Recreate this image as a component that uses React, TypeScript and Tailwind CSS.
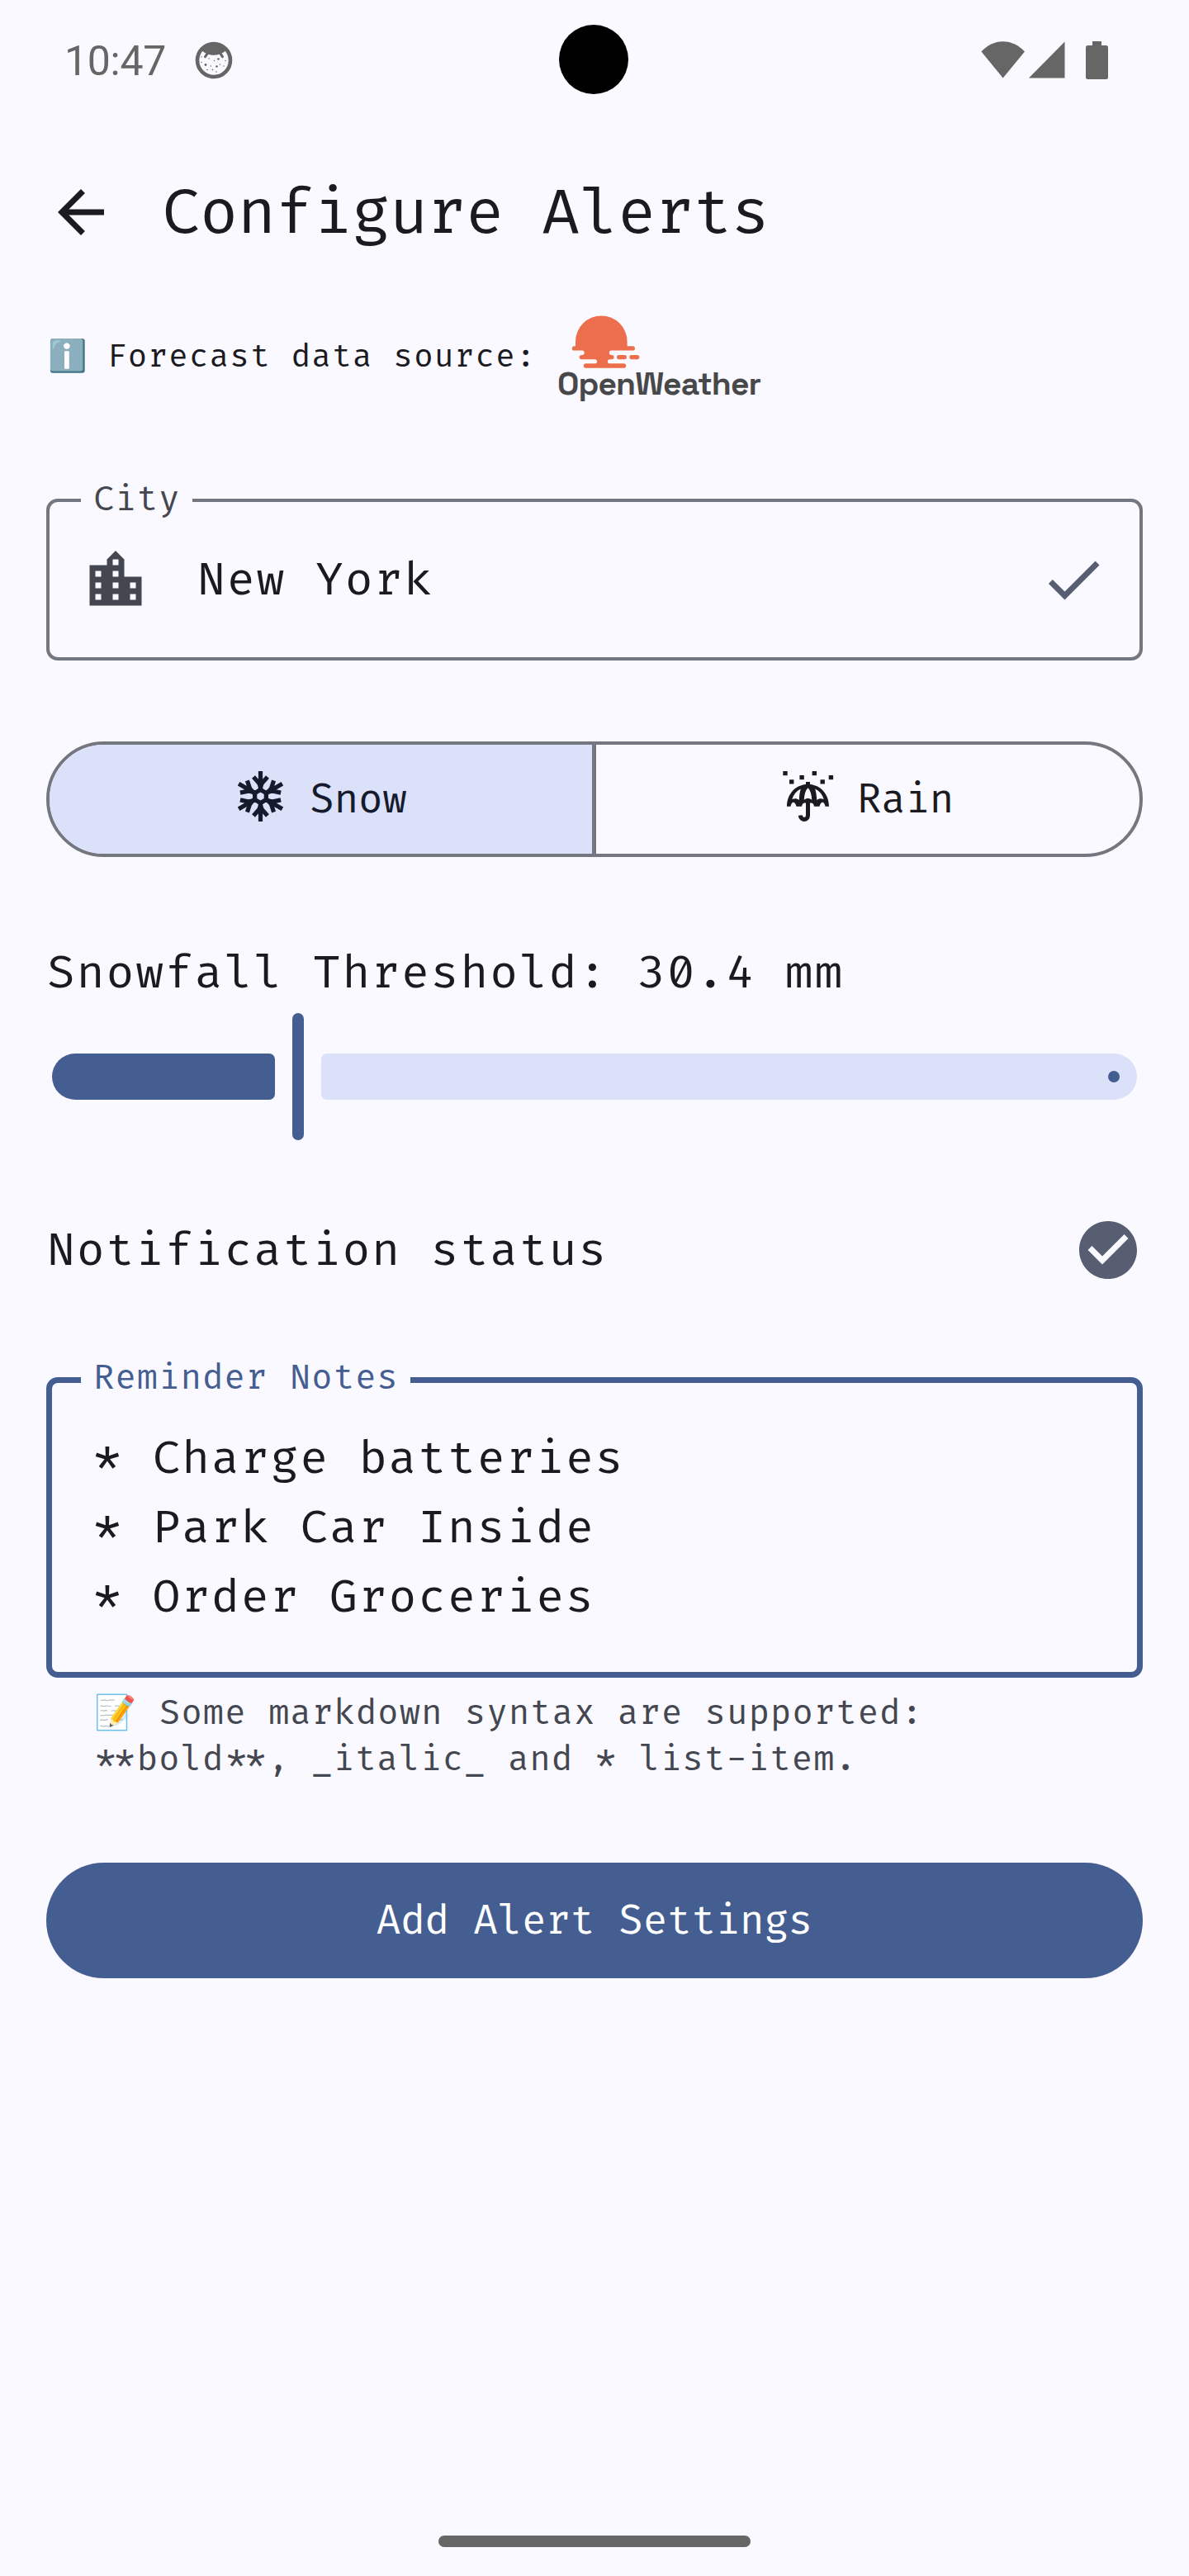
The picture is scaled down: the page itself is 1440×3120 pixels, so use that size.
import type { ReactNode } from "react";

function StatusBar() {
  return (
    <div className="relative flex h-36 items-center justify-between pl-[78px] pr-[98px] text-[#666666]">
      <div className="flex items-center">
        <span className="w-[124px] whitespace-nowrap pt-1 font-[Roboto] text-[50px] leading-[56px] tracking-[-0.3px]">10:47</span>
        <svg className="mt-[2px] ml-[34px] size-[46px]" viewBox="0 0 46 46">
          <circle cx="23" cy="23" r="20" fill="#faf9ff" stroke="#666666" strokeWidth="4.6" />
          <path d="M7 9.5C10 5 16 1.5 23 1.5S36 5 39 9.500l-3 3c-1.500 1-2.500 1.600-3.500 2l2.300 3.500a1.300 1.300 0 0 1-2.600 1.400l-2.600-3.600c-4 1.200-9 1.200-13.200 0l-2.600 3.600a1.300 1.300 0 0 1-2.600-1.400l2.300-3.500c-1-.4-2-1-3.500-2z" fill="#666666" />
          <g fill="#666666">
            <circle cx="28.500" cy="21.500" r="1.300" />
            <circle cx="13" cy="28.500" r="1.400" />
            <circle cx="26.500" cy="30.500" r="1.300" />
            <circle cx="8" cy="19" r=".7" />
            <circle cx="17" cy="21" r=".7" />
            <circle cx="23.500" cy="23.500" r=".7" />
            <circle cx="37" cy="23.500" r=".7" />
            <circle cx="8" cy="25.500" r=".7" />
            <circle cx="19.300" cy="30" r=".7" />
            <circle cx="30.500" cy="28" r=".7" />
            <circle cx="35" cy="30" r=".7" />
            <circle cx="15" cy="34.500" r=".8" />
            <circle cx="21.500" cy="34.500" r=".8" />
            <circle cx="26" cy="37" r=".8" />
          </g>
        </svg>
      </div>
      <div className="absolute left-[677px] top-[30px] size-[84px] rounded-full bg-black" />
      <svg className="mt-[2px] h-[48px] w-[154px]" viewBox="0 0 154 48" fill="currentColor">
        <path d="M.5 13.500C7.500 6 16.500 1.200 26.700 1.200S46 6 53 13.500L26.700 45.500z" />
        <path d="M58 45.500 101.500 1.500v44z" />
        <path d="M135 1h11v5h5.500a2.500 2.500 0 0 1 2.500 2.500v36a2.500 2.500 0 0 1-2.500 2.500h-22a2.500 2.500 0 0 1-2.500-2.500v-36A2.500 2.500 0 0 1 129.500 6H135z" />
      </svg>
    </div>
  );
}

function OpenWeatherLogo() {
  return (
    <div className="flex w-[246px] flex-col pt-[2px]">
      <svg className="ml-[17px] h-[64px] w-[84px]" viewBox="691 382 84 64" fill="#ec6e4c">
        <path d="M696 420v-6.300a31.300 31.300 0 0 1 62.600 0V419.300H765.300a2.650 2.650 0 0 1 0 5.300H739.500a2.700 2.700 0 0 0 0 5.400H740a2.600 2.600 0 0 1 0 5.200H737.500a2.500 2.500 0 0 0 0 5.100H754.500a2.650 2.650 0 0 1 0 5.400H708.500a2.650 2.650 0 0 1 0-5.400H719.500a2.500 2.500 0 0 0 0-5.100H703.300a2.600 2.600 0 0 1 0-5.200H704a2.700 2.700 0 0 0 0-5.400H694.500a2.650 2.650 0 0 1 0-5.300H696z" />
        <rect x="746" y="430" width="12" height="5.200" rx="2.600" />
        <rect x="761.300" y="430" width="12" height="5.200" rx="2.600" />
      </svg>
      <span className="whitespace-nowrap font-['Space_Grotesk',Inter,sans-serif] text-[39px] font-bold leading-[38px] tracking-[-0.9px] text-[#48484a]">OpenWeather</span>
    </div>
  );
}

function Field({ label, className, labelClass, children }: { label: string; className: string; labelClass: string; children: ReactNode }) {
  return (
    <div className={"relative rounded-[14px] " + className}>
      <span className={"absolute whitespace-nowrap bg-[#faf9ff] pl-[15px] pr-[14px] text-[41px] leading-[56px] tracking-[1.2px] " + labelClass}>{label}</span>
      {children}
    </div>
  );
}

function Snowflake() {
  return (
    <svg className="mb-[7px] size-[63px]" viewBox="-31.500 -31.500 63 63" fill="none" stroke="currentColor" strokeWidth="5.200">
      <path d="M0-7.900 6.800-3.950V3.950L0 7.900-6.800 3.950V-3.950z" />
      {[0, 60, 120, 180, 240, 300].map((a) => (
        <g key={a} transform={`rotate(${a})`}>
          <path d="M0-7V-30.500M-8.500-23.500 0-14 8.500-23.500" />
          <path d="M-4-15 4-15 2.500-10 5-7H-5L-2.500-10z" fill="currentColor" stroke="none" />
        </g>
      ))}
    </svg>
  );
}

function Umbrella() {
  return (
    <svg className="mb-[7px] size-[63px]" viewBox="946 933 63 63">
      <g fill="currentColor">
        <rect x="947.300" y="934" width="5.400" height="5.200" />
        <rect x="967.400" y="939" width="5.400" height="5.200" />
        <rect x="982.600" y="934" width="5.400" height="5.200" />
        <rect x="1002.700" y="939" width="5.400" height="5.200" />
        <rect x="955" y="944.300" width="5.400" height="5.200" />
        <rect x="992.500" y="944.300" width="5.400" height="5.200" />
        <path d="M975 947h5v3c13 1.200 23 12 23 26.800h-4.500c-.5-3-1.800-5-3.300-5s-3.200 2-3.700 5h-6.500c-.5-2.500-1.500-4-3-4.300h-9c-1.500.3-2.500 1.800-3 4.300h-6.500c-.5-3-2.200-5-3.700-5s-2.800 2-3.300 5H952c0-14.800 10-25.600 23-26.800z" />
      </g>
      <g fill="#faf9ff">
        <path d="M968.800 955.500c-5.500 2.700-9 7-10.500 12.600 3-1.300 6-1 8.500.8.200-5 .8-9.500 2-13.400z" />
        <path d="M986.200 955.500c5.500 2.700 9 7 10.500 12.600-3-1.300-6-1-8.500.8-.2-5-.8-9.500-2-13.400z" />
        <path d="M977.500 954.300c-3 3-4.500 8-4.700 14.500 1.500-1.300 3-1.800 4.700-1.800s3.200.5 4.700 1.800c-.2-6.500-1.700-11.500-4.700-14.500z" />
      </g>
      <path d="M977.500 969v18.500c0 6.500-8.800 6.500-9.200 0" fill="none" stroke="currentColor" strokeWidth="5" />
    </svg>
  );
}

function Segment({ icon, label, className }: { icon: ReactNode; label: string; className: string }) {
  return (
    <div className={"flex items-center justify-center gap-7 text-[48px] tracking-[-0.19px] " + className}>
      {icon}
      <span className="pt-[4px]">{label}</span>
    </div>
  );
}

function ThresholdSlider() {
  return (
    <div className="mt-1.5 flex h-[154px] items-center pl-[7px] pr-[7px]">
      <div className="h-14 w-[270px] rounded-l-[28px] rounded-r-[7px] bg-[#455e91]" />
      <div className="mx-[21px] h-full w-[14px] rounded-full bg-[#455e91]" />
      <div className="flex h-14 flex-1 items-center justify-end rounded-l-[7px] rounded-r-[28px] bg-[#dce1fa] pr-[21px]">
        <div className="size-[14px] rounded-full bg-[#455e91]" />
      </div>
    </div>
  );
}

export default function App() {
  return (
    <div className="flex h-[3120px] w-[1440px] flex-col overflow-hidden bg-[#faf9ff] font-['Fira_Code','DejaVu_Sans_Mono',monospace] text-[#1b1b1f]">
      <StatusBar />

      <header className="flex h-[224px] items-center pl-14">
        <svg className="mt-[2px] size-[84px]" viewBox="0 0 24 24" fill="currentColor">
          <path d="M20 11H7.830l5.590-5.590L12 4l-8 8 8 8 1.410-1.410L7.830 13H20v-2z" />
        </svg>
        <h1 className="ml-14 whitespace-nowrap pt-1.5 text-[75px] leading-[98px] tracking-[-0.15px]">Configure Alerts</h1>
      </header>

      <main className="flex flex-col px-14">
        <div className="flex h-32 items-center text-[38px]">
          <span className="w-[74px] whitespace-nowrap pl-[2px] pt-[1px]">ℹ️</span>
          <span className="w-[545px] whitespace-nowrap pt-[1px] tracking-[1.37px]">Forecast data source:</span>
          <OpenWeatherLogo />
        </div>

        <Field label="City" className="mt-[108px] flex h-[196px] items-center border-4 border-[#74777f] px-[38px]" labelClass="left-[38px] top-[-30px] text-[#44474f]">
          <svg className="size-[84px] text-[#44474f]" viewBox="0 0 24 24" fill="currentColor">
            <path d="M15 11V5l-3-3-3 3v2H3v14h18V11h-6zm-8 8H5v-2h2v2zm0-4H5v-2h2v2zm0-4H5V9h2v2zm6 8h-2v-2h2v2zm0-4h-2v-2h2v2zm0-4h-2V9h2v2zm0-4h-2V5h2v2zm6 12h-2v-2h2v2zm0-4h-2v-2h2v2z" />
          </svg>
          <span className="ml-[57px] flex-1 pt-[2px] text-[55px] leading-[84px] tracking-[1.9px]">New York</span>
          <svg className="size-[84px] text-[#575e71]" viewBox="0 0 24 24" fill="currentColor">
            <path d="M9 16.170 4.830 12l-1.420 1.410L9 19 21 7l-1.410-1.410z" />
          </svg>
        </Field>

        <div className="mt-[98px] flex h-[140px] overflow-hidden rounded-full border-4 border-[#74777f]">
          <Segment icon={<Snowflake />} label="Snow" className="w-[662px] border-r-[5px] border-[#74777f] bg-[#dce1fa] text-[#151b2c]" />
          <Segment icon={<Umbrella />} label="Rain" className="flex-1" />
        </div>

        <p className="mt-[99px] whitespace-nowrap pl-[1px] text-[55px] leading-[84px] tracking-[1.9px]">Snowfall Threshold: 30.4 mm</p>
        <ThresholdSlider />

        <div className="mt-[91px] flex h-[84px] items-center justify-between">
          <span className="pl-[1px] pt-[3px] text-[55px] tracking-[1.9px]">Notification status</span>
          <svg className="size-[84px] text-[#575e71]" viewBox="0 0 24 24" fill="currentColor">
            <path d="M12 2C6.480 2 2 6.480 2 12s4.480 10 10 10 10-4.480 10-10S17.520 2 12 2zm-2 15-5-5 1.410-1.410L10 14.170l7.590-7.590L19 8l-9 9z" />
          </svg>
        </div>

        <Field label="Reminder Notes" className="mt-28 h-[364px] border-[7px] border-[#455e91] pl-[50px] pt-[50px]" labelClass="left-[35px] top-[-33px] text-[#455e91]">
          <div className="text-[55px] leading-[84px] tracking-[1.9px]">
            <p>* Charge batteries</p>
            <p>* Park Car Inside</p>
            <p>* Order Groceries</p>
          </div>
        </Field>

        <div className="mt-[16px] whitespace-nowrap pl-14 text-[41px] leading-[56px] tracking-[1.2px] text-[#44474f]">
          <p className="flex h-14">
            <span className="w-[81px] pl-[2px]">📝</span>
            <span>Some markdown syntax are supported:</span>
          </p>
          <p className="pl-[1px]">
            <span className="px-[1.2px] tracking-normal">**</span>bold<span className="px-[1.2px] tracking-normal">**</span>, _italic_ and * list-item.
          </p>
        </div>

        <button className="mt-[96px] h-[140px] rounded-full bg-[#455e91] pt-[3px] text-[48px] tracking-[-0.19px] text-white">Add Alert Settings</button>
      </main>

      <div className="mb-[35px] mt-auto h-[14px] w-[378px] self-center rounded-full bg-[#666666]" />
    </div>
  );
}
